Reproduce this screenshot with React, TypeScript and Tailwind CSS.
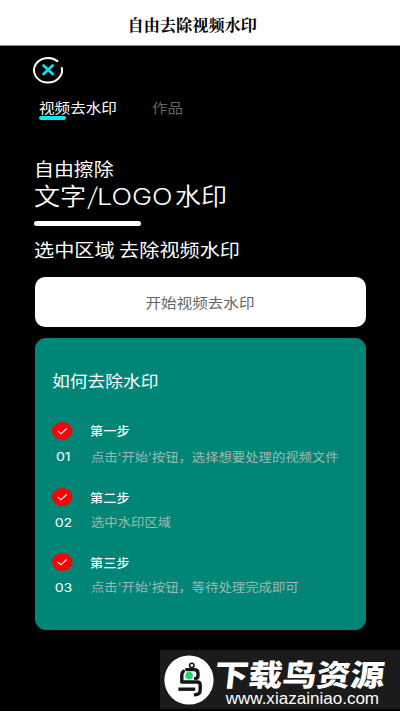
const steps = [
  { no: '01', title: '第一步', text: "点击'开始'按钮，选择想要处理的视频文件", top: 'pt-0', gap: 'pt-[6px]' },
  { no: '02', title: '第二步', text: '选中水印区域', top: 'pt-[1px]', gap: 'pt-[4px]' },
  { no: '03', title: '第三步', text: "点击'开始'按钮，等待处理完成即可", top: 'pt-[1px]', gap: 'pt-[4px]' },
];

function Logo() {
  return (
    <svg className="block h-7 w-8" viewBox="0 0 32 28" fill="none" strokeLinecap="round">
      <path d="M25.4 5.1A14 12.3 0 1 0 29.8 12.1" stroke="#fff" strokeWidth="2" />
      <path d="M11.6 9.6l9 8.4M20.6 9.6l-9 8.4" stroke="#12dfe6" strokeWidth="2.8" />
    </svg>
  );
}

function CheckBadge() {
  return (
    <svg className="block h-[18px] w-[21px]" viewBox="0 0 21 18" fill="none">
      <ellipse cx="10.2" cy="9" rx="10.2" ry="9" fill="#fb0007" />
      <path d="M5.9 9.1l3 2.7 5.8-5.3" stroke="#fff" strokeWidth="1.1" />
    </svg>
  );
}

function BirdLogo() {
  return (
    <svg className="block h-[50px] w-[50px] shrink-0" viewBox="0 0 50 50" fill="none">
      <circle cx="25" cy="25" r="24.6" fill="#fff" />
      <g stroke="#161616" strokeWidth="3.4" strokeLinejoin="round" strokeLinecap="round">
        <circle cx="27.8" cy="10.4" r="2.2" strokeWidth="1.6" />
        <path d="M22.6 14.6h7.4q4 0 4 3.6v2.6q0 2.6-2.6 2.6" />
        <path d="M19.4 16.4q-1.6 1.2-1.6 3.6v7h15.4q3 0 3 3v5q0 4.2-4.8 4.8" />
        <path d="M14.4 34.2h16.8" strokeLinecap="butt" />
      </g>
      <circle cx="25.1" cy="20.6" r="3.8" fill="#25d366" />
    </svg>
  );
}

export default function App() {
  return (
    <div className="flex h-[711px] w-[400px] flex-col overflow-hidden bg-black font-['Noto_Sans','Noto_Sans_CJK_SC',sans-serif] whitespace-nowrap text-white">
      <header className="h-[46px] shrink-0 border-b border-[#888] bg-white pt-3 pl-[127.5px]">
        <h1 className="font-['Noto_Serif_CJK_SC','Noto_Sans_CJK_SC',serif] text-[16.2px] leading-6 font-bold text-black">自由去除视频水印</h1>
      </header>

      <div className="pt-[10px] pl-8">
        <Logo />
      </div>

      <nav className="mt-[13px] flex h-[24px] pl-[38.5px] font-['Noto_Sans_CJK_SC',sans-serif] text-[14px] leading-5">
        <div className="w-[113.5px]">
          <div className="h-[19px] origin-left scale-x-[1.112]">视频去水印</div>
          <div className="h-1 w-[27px] rounded-full bg-[#00eef5]" />
        </div>
        <div className="h-5 origin-left scale-x-[1.112] text-[#606060]">作品</div>
      </nav>

      <section className="pt-[35px] pl-[34px] font-['Noto_Sans_CJK_SC',sans-serif]">
        <div className="h-6 origin-left scale-x-[1.12] text-[17.8px] leading-6">自由擦除</div>
        <div className="mt-px flex h-7 text-[23.3px] leading-7 font-[350]">
          <span className="w-[53px]"><span className="inline-block origin-left scale-x-[1.12]">文字</span></span>
          <span className="w-[10px]"><span className="inline-block origin-left scale-x-[1.2] font-light">/</span></span>
          <span className="w-[77.5px]"><span className="inline-block origin-left scale-x-[1.16] font-['Inter'] font-light">LOGO</span></span>
          <span className="inline-block origin-left scale-x-[1.12]">水印</span>
        </div>
        <div className="mt-[12px] h-[4.5px] w-[107px] rounded-full bg-white" />
        <div className="mt-[11.5px] h-6 origin-left scale-x-[1.133] text-[17.8px] leading-6">选中区域 去除视频水印</div>
      </section>

      <main className="mt-[16px] pl-[34.5px] font-['Noto_Sans_CJK_SC',sans-serif]">
        <button className="flex h-[50px] w-[331px] items-center justify-center rounded-[10px] bg-white text-[14px] text-[#666]">
          <span className="scale-x-[1.112]">开始视频去水印</span>
        </button>

        <div className="mt-[11px] h-[292px] w-[331px] rounded-[11px] bg-[#018576] pt-[30px] pl-[17.5px]">
          <h2 className="h-6 origin-left scale-x-[1.11] text-[16px] leading-6">如何去除水印</h2>
          <div className="pt-[29px]">
            {steps.map((step) => (
              <div key={step.no} className="flex h-[65.5px]">
                <div className="w-[38px]">
                  <div className="pt-[1px]">
                    <CheckBadge />
                  </div>
                  <div className="mt-[8px] h-[18px] w-[22px] text-center font-['Inter'] text-[12px] leading-[18px]">
                    <span className="inline-block scale-x-[1.18]">{step.no}</span>
                  </div>
                </div>
                <div className={step.top}>
                  <div className="h-5 origin-left scale-x-[1.1] text-[12px] leading-5 font-medium">{step.title}</div>
                  <div className={step.gap}>
                    <div className="ml-[0.7px] h-5 origin-left scale-x-[1.112] text-[12px] leading-5 text-[#9dbbb5]">{step.text}</div>
                  </div>
                </div>
              </div>
            ))}
          </div>
        </div>
      </main>

      <footer className="mt-[20px] ml-[160px] flex h-[59px] w-[240px] shrink-0 bg-[#1b1b1b] pt-[5px] pl-1">
        <BirdLogo />
        <div className="pl-[1px]">
          <div className="h-[35px] -skew-x-6 font-['Noto_Sans_CJK_SC',sans-serif] text-[34px] leading-[38px] font-black">
            <span className="inline-block origin-center scale-y-[0.88]">下载鸟资源</span>
          </div>
          <div className="origin-left scale-x-[1.065] pl-[10px] font-['Liberation_Sans',sans-serif] text-[16px] leading-[18px]">www.xiazainiao.com</div>
        </div>
      </footer>
    </div>
  );
}
